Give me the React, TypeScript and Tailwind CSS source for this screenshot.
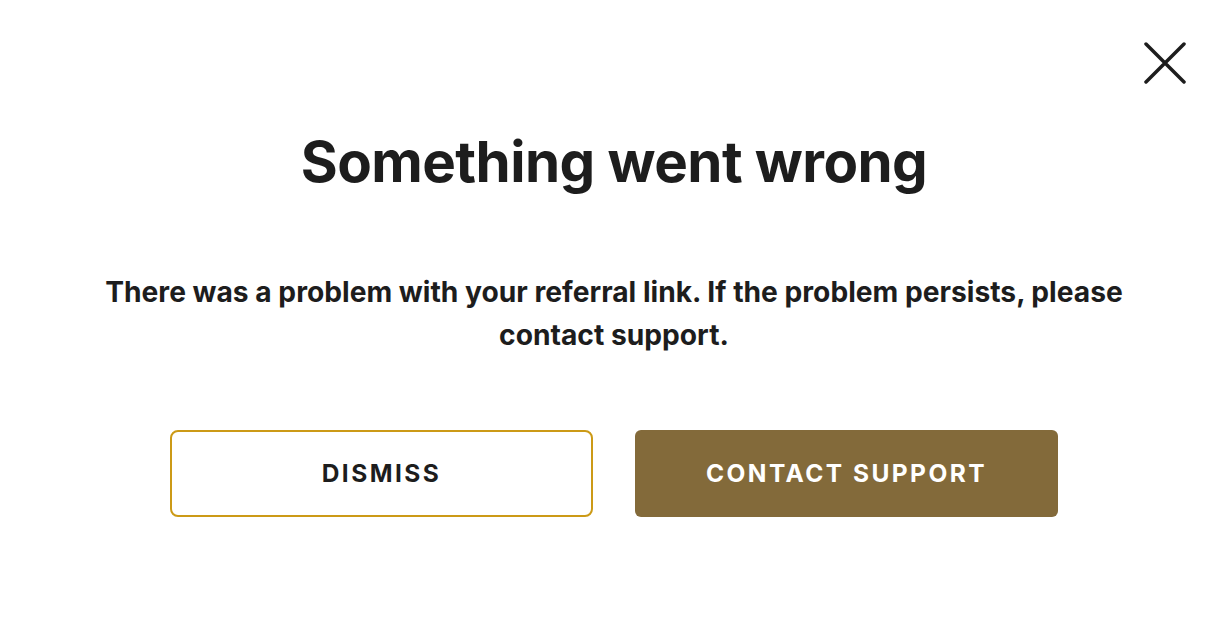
export default function App() {
    return (
        <div className="w-[1228px] h-[643px] bg-white text-[#1d1d1d] flex flex-col items-center" style={{ fontFamily: 'Inter, "Noto Sans", sans-serif' }}>
            {/* Close */}
            <div className="w-full flex justify-end pt-[42px] pr-[42px]">
                <button className="w-[42px] h-[42px] text-[#1d1d1d]">
                    <svg viewBox="0 0 42 42" className="w-[42px] h-[42px]" fill="none" stroke="currentColor" strokeWidth={3.5} strokeLinecap="round">
                        <path d="M2 2L40 40M40 2L2 40" />
                    </svg>
                </button>
            </div>

            <h1 className="mt-[46px] text-[56.5px] leading-[64px] font-bold tracking-[-0.01em]">Something went wrong</h1>

            <p className="mt-[77px] w-[1040px] text-center text-[28.2px] leading-[43px] font-bold">
                There was a problem with your referral link. If the problem persists, please contact support.
            </p>

            <div className="mt-[73px] flex gap-[42px]">
                <button className="w-[423px] h-[87px] rounded-[8px] border-2 border-[#cc9a16] text-[24.5px] font-bold tracking-[0.1em] text-[#1d1d1d]">
                    DISMISS
                </button>
                <button className="w-[423px] h-[87px] rounded-[6px] bg-[#836a3a] text-[24.5px] font-bold tracking-[0.1em] text-white">
                    CONTACT SUPPORT
                </button>
            </div>
        </div>
    )
}
